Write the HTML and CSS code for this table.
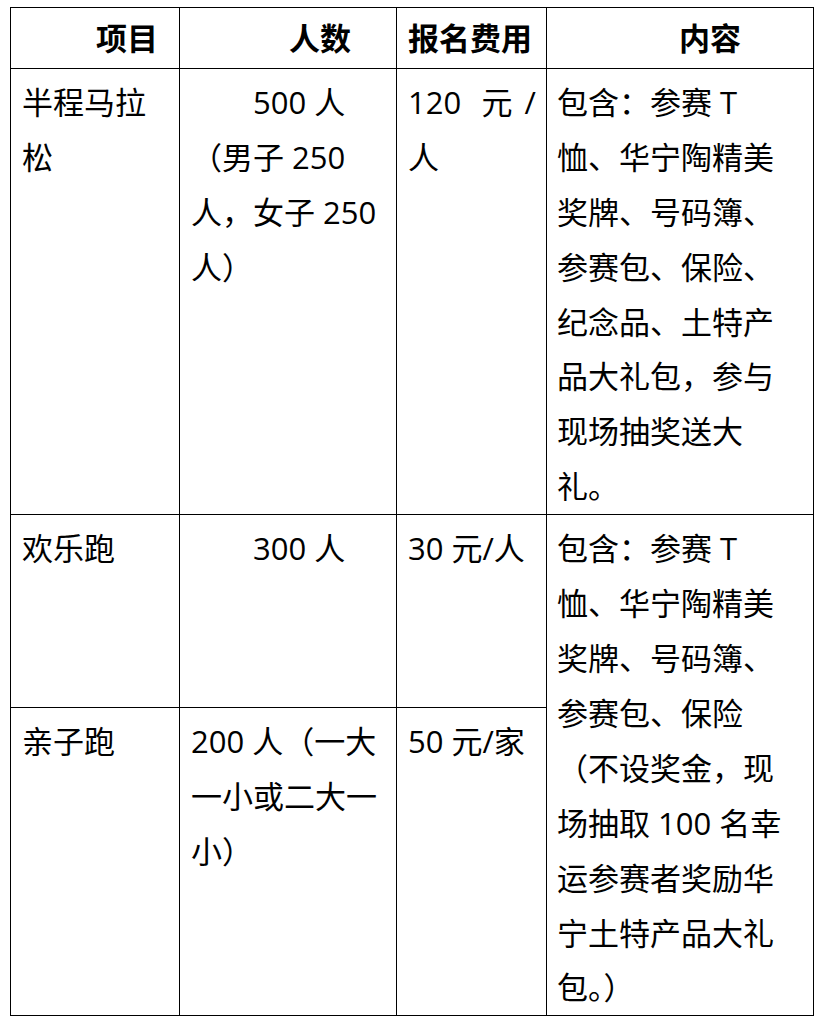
FILE: index.html
```html
<!DOCTYPE html>
<html lang="zh-CN">
<head>
<meta charset="utf-8">
<title>报名费用</title>
<link rel="stylesheet" href="styles.css">
</head>
<body>
<table class="fees">
  <colgroup>
    <col class="c1">
    <col class="c2">
    <col class="c3">
    <col class="c4">
  </colgroup>
  <thead>
    <tr class="head">
      <th class="h-item">项目</th>
      <th class="h-num">人数</th>
      <th class="h-fee">报名费用</th>
      <th class="h-content">内容</th>
    </tr>
  </thead>
  <tbody>
    <tr class="r1">
      <td>半程马拉松</td>
      <td class="indent">500 人（男子 250 人，女子 250 人）</td>
      <td class="fee">120 元/人</td>
      <td class="content">包含：参赛 T 恤、华宁陶精美奖牌、号码簿、参赛包、保险、纪念品、土特产品大礼包，参与现场抽奖送大礼。</td>
    </tr>
    <tr class="r2">
      <td>欢乐跑</td>
      <td class="indent">300 人</td>
      <td class="fee">30 元/人</td>
      <td class="content" rowspan="2">包含：参赛 T 恤、华宁陶精美奖牌、号码簿、参赛包、保险（不设奖金，现场抽取 100 名幸运参赛者奖励华宁土特产品大礼包。）</td>
    </tr>
    <tr class="r3">
      <td>亲子跑</td>
      <td>200 人（一大一小或二大一小）</td>
      <td class="fee">50 元/家</td>
    </tr>
  </tbody>
</table>
</body>
</html>
```

FILE: styles.css
```css
html, body {
  margin: 0;
  padding: 0;
  background: #ffffff;
}

body {
  font-family: "Open Sans", "Noto Sans CJK SC", sans-serif;
  font-size: 31px;
  color: #000000;
}

.fees {
  border-collapse: collapse;
  table-layout: fixed;
  width: 803px;
  margin: 7px 0 0 10px;
}

.c1 { width: 169px; }
.c2 { width: 217px; }
.c3 { width: 150px; }
.c4 { width: 267px; }

.fees th,
.fees td {
  border: 1px solid #000000;
  vertical-align: top;
  text-align: left;
  line-height: 54.9px;
  padding: 6px 10px 0 11px;
}

.fees th {
  font-weight: 700;
  padding-top: 3px;
  padding-bottom: 2px;
  white-space: nowrap;
}

.fees th.h-item { padding-left: 85px; }
.fees th.h-num { padding-left: 109px; }
.fees th.h-fee { padding-left: 11px; }
.fees th.h-content { padding-left: 132px; }

.fees td.indent { text-indent: 2em; }

.fees td.fee { text-align: justify; }

.fees td.content {
  padding-left: 10px;
  padding-right: 26px;
}

.r2 { height: 193px; }
```
